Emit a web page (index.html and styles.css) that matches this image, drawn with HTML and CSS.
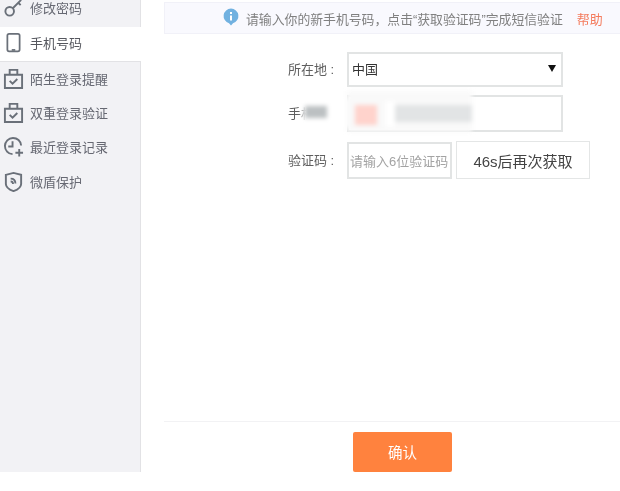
FILE: index.html
```html
<!DOCTYPE html>
<html lang="zh">
<head>
<meta charset="utf-8">
<title>手机号码</title>
<link rel="stylesheet" href="styles.css">
</head>
<body>
<div class="page">
  <aside class="side">
    <ul class="menu">
      <li class="item first"><svg class="ico" viewBox="0 0 22 22"><circle cx="7" cy="15" r="4.500" /><path d="M10 12l9-9M16 6l2.500 2.500" /></svg>修改密码</li>
      <li class="item active"><svg class="ico" viewBox="0 0 22 24"><rect x="4" y="2" width="14" height="20" rx="2" /><path d="M9 20.500h4" /></svg>手机号码</li>
      <li class="item"><svg class="ico" viewBox="0 0 22 22"><path d="M2 7h18v14H2zM7 7V2h8v5M7 13.500l3 3 5-5" /></svg>陌生登录提醒</li>
      <li class="item"><svg class="ico" viewBox="0 0 22 22"><path d="M2 7h18v14H2zM7 7V2h8v5M7 13.500l3 3 5-5" /></svg>双重登录验证</li>
      <li class="item"><svg class="ico" viewBox="0 0 22 22"><path d="M10 19A8.500 8.500 0 1 1 19 10M10 5.500V11H5.500M13 17.500h8M17 13.500v8" /></svg>最近登录记录</li>
      <li class="item"><svg class="ico" viewBox="0 0 22 22"><path d="M3 4l8-2 8 2v9.500c0 3.500-4 6-8 7.500-4-1.500-8-4-8-7.500z" /><path d="M8 8c3 0 5 2 5 5M8 11c1.500 0 2.500 1 2.500 2.500" /></svg>微盾保护</li>
    </ul>
  </aside>
  <main class="main">
    <div class="notice">
      <svg class="info" viewBox="0 0 18 18"><path class="info-bg" d="M9 1a7.500 7.500 0 0 1 2 14.700L9 18l-2-2.300A7.500 7.500 0 0 1 9 1z" /><path class="info-i" d="M9 4.500v2M9 8v5" /></svg>
      <span class="notice-text">请输入你的新手机号码，点击“获取验证码”完成短信验证</span>
      <a class="help">帮助</a>
    </div>
    <form class="form">
      <div class="row row-select">
        <span class="label">所在地 :</span>
        <div class="box select"><span>中国</span><span class="arrow"></span></div>
      </div>
      <div class="row row-phone">
        <span class="label">手机号 :</span>
        <div class="box phone"></div>
        <div class="smear">
          <i class="s0"></i><i class="s1"></i><i class="s2"></i><i class="s3"></i><i class="s4"></i><i class="s5"></i>
        </div>
      </div>
      <div class="row row-code">
        <span class="label">验证码 :</span>
        <div class="box code">请输入6位验证码</div>
        <div class="resend">46s后再次获取</div>
      </div>
    </form>
    <div class="footer">
      <button class="confirm" type="button">确认</button>
    </div>
  </main>
</div>
</body>
</html>
```
FILE: styles.css
```css
* { box-sizing: border-box; }
html, body { margin: 0; padding: 0; background: #fff; }
body {
  width: 620px;
  height: 491px;
  overflow: hidden;
  font-family: "Liberation Sans", "Noto Sans CJK SC", sans-serif;
  color: #555;
}
.page {
  display: flex;
  height: 472px;
  filter: blur(0.4px);
}
.side {
  width: 141px;
  flex: none;
  background: #f2f2f5;
  border-right: 1px solid #e2e2e5;
}
.menu {
  list-style: none;
  margin: -10px 0 0;
  padding: 0;
}
.item {
  height: 34.300px;
  padding: 0 0 2px 3px;
  display: flex;
  align-items: center;
  font-size: 13px;
  color: #666872;
  gap: 6px;
}
.item.first { height: 37px; padding-bottom: 3px; }
.item.active {
  background: #fff;
  width: 141px;
  height: 35px;
  padding-bottom: 3px;
  color: #55575e;
  border-bottom: 1px solid #e2e2e5;
}
.ico {
  width: 21px;
  height: 21px;
  flex: none;
  fill: none;
  stroke: #6a7079;
  stroke-width: 2;
}
.main {
  flex: 1;
  padding: 2px 0 0 23px;
  display: flex;
  flex-direction: column;
  min-width: 0;
}
.notice {
  height: 32px;
  flex: none;
  display: flex;
  align-items: center;
  padding-left: 57px;
  background: #f9f9fe;
  border: 1px solid #f1f1f8;
  border-right: 0;
  font-size: 12.850px;
  color: #808080;
}
.info { width: 18px; height: 19px; margin-right: 6px; margin-top: -3px; flex: none; }
.info-bg { fill: #71b1e0; }
.info-i { stroke: #fff; stroke-width: 2; fill: none; }
.help { margin-left: 14px; color: #f47c5e; font-size: 13px; }
.form {
  flex: 1;
  display: flex;
  flex-direction: column;
  padding-top: 18px;
}
.row {
  display: flex;
  align-items: center;
  position: relative;
}
.row-select { height: 35px; margin-bottom: 8px; }
.row-phone { height: 37px; margin-bottom: 9px; }
.row-code { height: 38px; }
.label {
  width: 183px;
  flex: none;
  padding-left: 124px;
  padding-bottom: 2px;
  font-size: 13px;
  color: #5f5f5f;
  white-space: nowrap;
}
.box {
  border: 2px solid #e2e4e4;
  background: #fff;
  font-size: 13px;
  display: flex;
  align-items: center;
  color: #333;
}
.select {
  width: 216px;
  height: 35px;
  justify-content: space-between;
  padding: 0 5px 2px 3px;
}
.arrow {
  width: 0;
  height: 0;
  border-left: 4px solid transparent;
  border-right: 4px solid transparent;
  border-top: 7px solid #111;
}
.phone { width: 216px; height: 37px; }
.code {
  width: 105px;
  height: 37px;
  padding-left: 1px;
  font-size: 13px;
  color: #a3a3a3;
  white-space: nowrap;
}
.resend {
  width: 134px;
  height: 38px;
  margin-left: 4px;
  border: 1px solid #e4e6e6;
  display: flex;
  align-items: center;
  justify-content: center;
  font-size: 15px;
  color: #444;
  white-space: nowrap;
}
.smear {
  position: absolute;
  left: 125px;
  top: -4px;
  width: 185px;
  height: 42px;
  filter: blur(2px);
}
.smear i { position: absolute; display: block; }
.s0 { left: 13px; top: 8px; width: 47px; height: 28px; background: #fff; }
.s1 { left: 16px; top: 15px; width: 22px; height: 12px; background: #bcc0c2; }
.s2 { left: 58px; top: 0; width: 125px; height: 41px; background: #f9f9f9; }
.s3 { left: 66px; top: 14px; width: 22px; height: 20px; background: #ffd3cc; }
.s4 { left: 96px; top: 10px; width: 10px; height: 26px; background: #fff; }
.s5 { left: 106px; top: 14px; width: 77px; height: 17px; background: #e2e4e5; }
.footer {
  height: 51px;
  flex: none;
  border-top: 1px solid #f2f2f4;
  padding: 10px 0 0 189px;
}
.confirm {
  display: block;
  width: 99px;
  height: 40px;
  border: 0;
  border-radius: 2px;
  background: #ff823e;
  color: #fff;
  font: 14.500px "Liberation Sans", "Noto Sans CJK SC", sans-serif;
  padding: 0 0 2px;
}
```
